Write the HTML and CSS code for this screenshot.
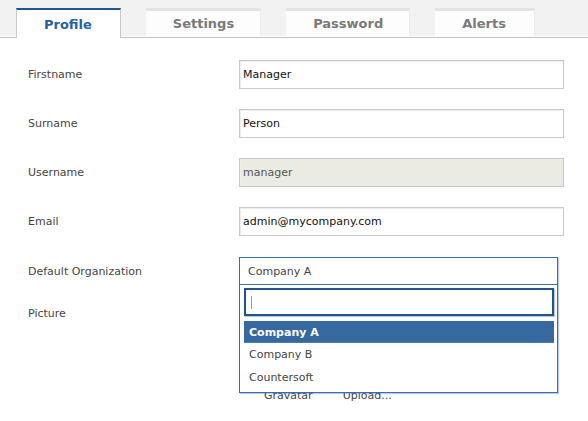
FILE: index.html
```html
<!DOCTYPE html>
<html>
<head>
<meta charset="utf-8">
<link rel="stylesheet" href="styles.css">
</head>
<body>
<div class="tabs">
  <div class="tab active">Profile</div>
  <div class="tab">Settings</div>
  <div class="tab">Password</div>
  <div class="tab">Alerts</div>
</div>
<div class="form">
  <div class="label">Firstname</div>
  <div class="input">Manager</div>
  <div class="label">Surname</div>
  <div class="input">Person</div>
  <div class="label">Username</div>
  <div class="input disabled">manager</div>
  <div class="label">Email</div>
  <div class="input">admin@mycompany.com</div>
  <div class="label org-label">Default Organization</div>
  <div class="org">
    <div class="dropdown">
      <div class="dd-value">Company A</div>
      <div class="dd-panel">
        <div class="dd-search"><span class="caret"></span></div>
        <div class="dd-option selected">Company A</div>
        <div class="dd-option">Company B</div>
        <div class="dd-option">Countersoft</div>
      </div>
    </div>
  </div>
  <div class="label pic-label">Picture</div>
  <div class="picture">
    <div class="avatar"></div>
    <div class="pic-links"><span>Gravatar</span><span>Upload...</span></div>
  </div>
</div>
</body>
</html>
```
FILE: styles.css
```css
html, body {
  margin: 0;
  padding: 0;
  background: #fff;
  font-family: "DejaVu Sans", Verdana, sans-serif;
  font-size: 11px;
  color: #333;
}
body {
  min-height: 421px;
}
.tabs {
  display: flex;
  align-items: flex-end;
  gap: 25px;
  height: 37px;
  padding-left: 16px;
  background: #f2f2f2;
  border-bottom: 1px solid #c4c4c4;
  box-shadow: inset 0 -1px 0 #fafafa;
}
.tab {
  box-sizing: border-box;
  height: 28px;
  margin-bottom: 1px;
  padding: 0 26px 0 27px;
  display: flex;
  align-items: center;
  justify-content: center;
  background: #fdfdfd;
  border-top: 3px solid #e3e3e3;
  border-right: 1px solid #ececec;
  font-size: 13px;
  font-weight: bold;
  color: #7a7a7a;
}
.tab:last-child {
  padding-right: 28px;
}
.tab.active {
  height: 30px;
  margin-bottom: -1px;
  padding: 0 28px 0 27px;
  background: #fff;
  border-top: 2px solid #1d5695;
  border-left: 1px solid #c8c8c8;
  border-right: 1px solid #c8c8c8;
  color: #2860a0;
}
.form {
  display: grid;
  grid-template-columns: 211px 325px;
  row-gap: 20px;
  padding: 22px 0 0 28px;
  align-items: center;
}
.label {
  color: #444;
}
.input {
  box-sizing: border-box;
  height: 29px;
  padding: 0 3px;
  display: flex;
  align-items: center;
  border: 1px solid #c9c9c9;
  box-shadow: inset 1px 1px 0 #ededed;
  color: #111;
  background: #fff;
}
.input.disabled {
  background: #ebebe4;
  color: #555;
}
.org-label {
  margin-top: 1px;
}
.org {
  position: relative;
  height: 28px;
  margin-top: 1px;
}
.dropdown {
  position: absolute;
  top: 0;
  left: 0;
  width: 319px;
  box-sizing: border-box;
  border: 1px solid #3a6ea8;
  box-shadow: 1px 1px 1px rgba(60, 110, 170, 0.35);
  background: #fff;
  z-index: 2;
}
.dd-value {
  height: 26px;
  padding-left: 8px;
  display: flex;
  align-items: center;
  color: #444;
  border-bottom: 1px solid #3a6ea8;
}
.dd-panel {
  padding: 3px 3px 3px 4px;
  display: flex;
  flex-direction: column;
}
.dd-search {
  box-sizing: border-box;
  height: 28px;
  border: 2px solid #24528c;
  box-shadow: 1px 1px 1px rgba(60, 110, 170, 0.35);
  margin-bottom: 5px;
  display: flex;
  align-items: center;
  padding-left: 5px;
}
.caret {
  display: block;
  width: 1px;
  height: 13px;
  background: #999;
}
.dd-option {
  height: 23px;
  padding-left: 5px;
  display: flex;
  align-items: center;
  color: #444;
}
.dd-option.selected {
  height: 22px;
  background: #35699f;
  color: #fff;
  font-weight: 600;
  box-shadow: inset 0 -1px 0 #4a7db2;
}
.pic-label {
  align-self: start;
  margin-top: 2px;
}
.picture {
  display: flex;
  flex-direction: column;
}
.avatar {
  height: 84px;
}
.pic-links {
  display: flex;
  gap: 30px;
  padding-left: 25px;
  color: #444;
}
```
